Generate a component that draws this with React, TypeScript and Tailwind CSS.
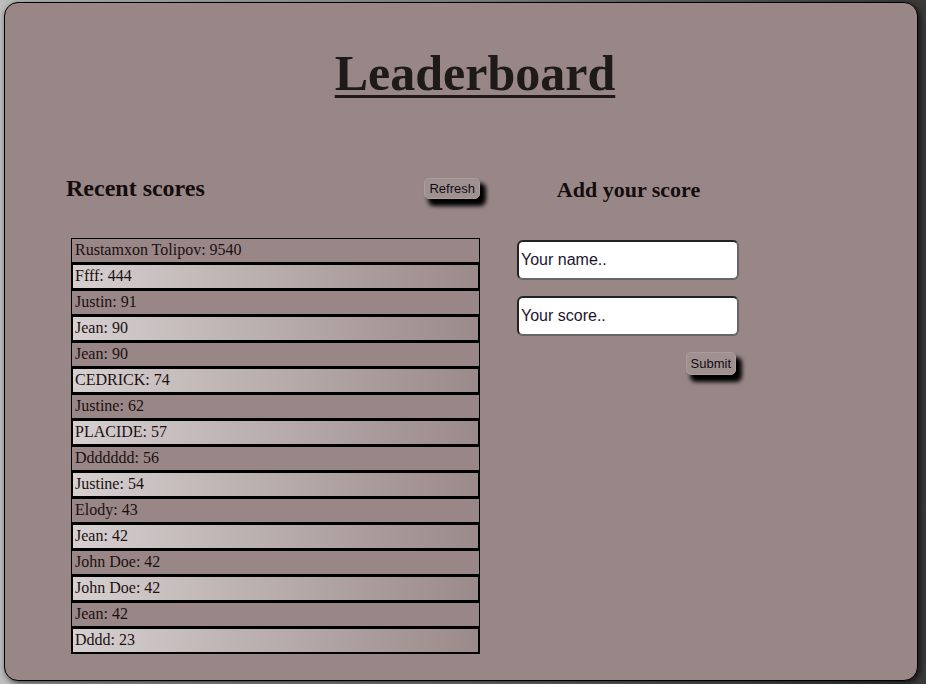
import React from "react";

const scores = [
  { name: "Rustamxon Tolipov", score: 9540 },
  { name: "Ffff", score: 444 },
  { name: "Justin", score: 91 },
  { name: "Jean", score: 90 },
  { name: "Jean", score: 90 },
  { name: "CEDRICK", score: 74 },
  { name: "Justine", score: 62 },
  { name: "PLACIDE", score: 57 },
  { name: "Ddddddd", score: 56 },
  { name: "Justine", score: 54 },
  { name: "Elody", score: 43 },
  { name: "Jean", score: 42 },
  { name: "John Doe", score: 42 },
  { name: "John Doe", score: 42 },
  { name: "Jean", score: 42 },
  { name: "Dddd", score: 23 },
];

const serif = "font-['Liberation_Serif',serif]";
const sans = "font-['Liberation_Sans',Arial,sans-serif]";

const App = () => {
  return (
    <div className="h-screen w-full overflow-hidden bg-linear-to-r from-[#bdbdbd] via-[#8a8a8a] to-[#3a3a3a] pt-[2px] pl-[4px]">
      <div className="h-[679px] w-[914px] rounded-[14px] border border-black bg-[#998787] pt-[45px] shadow-[2px_2px_6px_rgba(0,0,0,0.7)]">
        <h1
          className={`${serif} pl-[28px] text-center text-[50px] leading-[50px] font-bold text-[#1e1a1a] underline decoration-[3px] underline-offset-[5px]`}
        >
          Leaderboard
        </h1>

        <div className="mt-[76px] flex gap-[37px] pl-[61px]">
          <section className="w-[414px]">
            <div className="flex h-[28px] items-center justify-between">
              <h2 className={`${serif} text-[24px] leading-[28px] font-bold text-[#140d0d]`}>
                Recent scores
              </h2>
              <button
                className={`${sans} h-[21px] rounded-[5px] border border-[#ab9d9d] bg-[#a09191] px-[4px] text-[13px] leading-none text-[#120d14] shadow-[5px_6px_4px_1px_#000]`}
              >
                Refresh
              </button>
            </div>

            <ul className="mt-[36px] ml-[5px] w-[409px]">
              {scores.map((s, i) =>
                i % 2 === 0 ? (
                  <li
                    key={i}
                    className={`${serif} flex h-[25px] items-center border border-black pb-[1px] pl-[3px] text-[16px] text-[#1b1010]`}
                  >
                    {s.name}: {s.score}
                  </li>
                ) : (
                  <li
                    key={i}
                    className={`${serif} flex h-[27px] items-center border-2 border-black bg-linear-to-r from-[#d6d0d0] to-[#9b8a8a] pb-[1px] pl-[2px] text-[16px] text-[#1b1010]`}
                  >
                    {s.name}: {s.score}
                  </li>
                )
              )}
            </ul>
          </section>

          <section className="flex w-[223px] flex-col">
            <h2
              className={`${serif} mt-[3px] text-center text-[22px] leading-[26px] font-bold text-[#140d0d]`}
            >
              Add your score
            </h2>
            <input
              type="text"
              placeholder="Your name.."
              className={`${sans} mt-[37px] h-[40px] w-[222px] rounded-[6px] border-2 border-t-[#222] border-r-[#666] border-b-[#666] border-l-[#222] bg-white px-[2px] text-[16px] text-[#1c1530] placeholder:text-[#1c1530]`}
            />
            <input
              type="text"
              placeholder="Your score.."
              className={`${sans} mt-[16px] h-[40px] w-[222px] rounded-[6px] border-2 border-t-[#222] border-r-[#666] border-b-[#666] border-l-[#222] bg-white px-[2px] text-[16px] text-[#1c1530] placeholder:text-[#1c1530]`}
            />
            <div className="mt-[16px] flex justify-end pr-[4px]">
              <button
                className={`${sans} h-[23px] rounded-[5px] border border-[#ab9d9d] bg-[#a09191] px-[4px] text-[13px] leading-none text-[#120d14] shadow-[5px_6px_4px_1px_#000]`}
              >
                Submit
              </button>
            </div>
          </section>
        </div>
      </div>
    </div>
  );
};

export default App;
